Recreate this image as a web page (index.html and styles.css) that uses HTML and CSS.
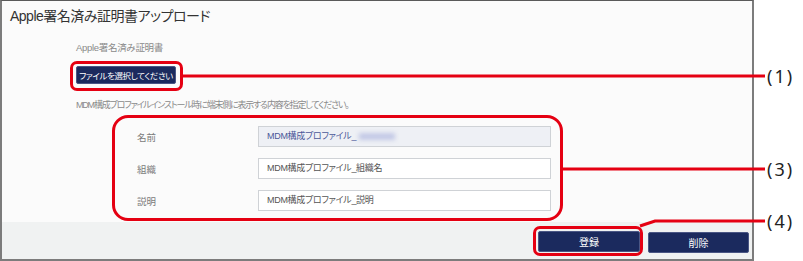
FILE: index.html
```html
<!DOCTYPE html>
<html lang="ja">
<head>
    <meta charset="UTF-8">
    <title>Apple署名済み証明書アップロード</title>
    <link rel="stylesheet" href="styles.css">
</head>
<body>
    <div class="page">
        <div class="screen">
            <div class="main">
                <h1 class="title">Apple署名済み証明書アップロード</h1>
                <div class="content">
                    <div class="field-label">Apple署名済み証明書</div>
                    <div class="mark mark-file">
                        <button class="btn btn-file">ファイルを選択してください</button>
                    </div>
                    <div class="hint">MDM構成プロファイルインストール時に端末側に表示する内容を指定してください。</div>
                    <div class="mark mark-form">
                        <div class="row">
                            <span class="row-label">名前</span>
                            <div class="input input-locked">MDM構成プロファイル_<span class="blurred"></span></div>
                        </div>
                        <div class="row">
                            <span class="row-label">組織</span>
                            <div class="input">MDM構成プロファイル_組織名</div>
                        </div>
                        <div class="row">
                            <span class="row-label">説明</span>
                            <div class="input">MDM構成プロファイル_説明</div>
                        </div>
                    </div>
                </div>
            </div>
            <div class="footer">
                <div class="mark mark-save">
                    <button class="btn btn-action">登録</button>
                </div>
                <button class="btn btn-action btn-delete">削除</button>
            </div>
        </div>

        <!-- callout lines drawn over the screen -->
        <svg class="callouts" width="803" height="261" viewBox="0 0 803 261">
            <line x1="183" y1="76" x2="765" y2="76" />
            <line x1="562" y1="169" x2="765" y2="169" />
            <polyline points="640,226 655,221 765,221" />
        </svg>
        <span class="callout-num num-1">(1)</span>
        <span class="callout-num num-3">(3)</span>
        <span class="callout-num num-4">(4)</span>
    </div>
</body>
</html>
```

FILE: styles.css
```css
body {
    margin: 0;
    background: #fff;
    font-family: "Liberation Sans", "Noto Sans CJK JP", sans-serif;
    font-feature-settings: "palt";
}

.page {
    position: relative;
    width: 803px;
    height: 261px;
}

.screen {
    width: 754px;
    height: 261px;
    box-sizing: border-box;
    border: 2px solid #7c7c7c;
    border-top: 1px solid #5a5a5a;
    background: #fbfbfb;
    display: flex;
    flex-direction: column;
}

.main {
    flex: 1;
    padding: 5px 8px 0;
}

.title {
    margin: 0;
    font-size: 14px;
    font-weight: normal;
    letter-spacing: -0.5px;
    line-height: 20px;
    color: #333;
}

.content {
    padding-left: 66px;
}

.field-label {
    margin-top: 15px;
    font-size: 9.5px;
    line-height: 14px;
    color: #8a8a8a;
    letter-spacing: -0.3px;
}

.mark {
    border: 3px solid #e50012;
    border-radius: 7px;
    box-sizing: border-box;
}

.mark-file {
    display: inline-block;
    margin: 6px 0 0 -6px;
    padding: 2px 4px 4px 3px;
}

.btn {
    display: block;
    border: 1px solid #4a5684;
    border-radius: 2px;
    background: #1b2a5e;
    color: #fff;
    font-family: inherit;
    font-feature-settings: "palt";
    cursor: pointer;
    padding: 0;
}

.btn-file {
    width: 100px;
    height: 18px;
    font-size: 8.5px;
    letter-spacing: -0.4px;
}

.hint {
    margin-top: 7px;
    font-size: 9px;
    line-height: 14px;
    color: #8a8a8a;
    letter-spacing: -1.2px;
}

.mark-form {
    width: 451px;
    height: 106px;
    margin: 3px 0 0 36px;
    border-radius: 16px;
    padding: 8px 9px 0 22px;
    display: flex;
    flex-direction: column;
    gap: 11px;
}

.row {
    display: flex;
    align-items: center;
}

.row-label {
    width: 121px;
    font-size: 9.5px;
    color: #7a7a7a;
}

.input {
    flex: 1;
    height: 21px;
    box-sizing: border-box;
    border: 1px solid #cfd2d6;
    background: #fff;
    padding-left: 8px;
    font-size: 9px;
    line-height: 19px;
    color: #555;
    letter-spacing: -0.3px;
}

.input-locked {
    background: #eef0f5;
    color: #4b5899;
}

.blurred {
    display: inline-block;
    width: 36px;
    height: 7px;
    margin-left: 3px;
    vertical-align: -1px;
    background: #c3c9e6;
    filter: blur(2px);
}

.footer {
    height: 37px;
    background: #f0f2f2;
    display: flex;
    justify-content: flex-end;
    align-items: flex-start;
    gap: 5px;
    padding-right: 3px;
}

.mark-save {
    margin-top: 4px;
    padding: 2px 0 1px 2px;
}

.btn-action {
    width: 102px;
    height: 21px;
    font-size: 10px;
}

.btn-delete {
    margin-top: 10px;
    width: 101px;
}

.callouts {
    position: absolute;
    left: 0;
    top: 0;
    pointer-events: none;
}

.callouts line,
.callouts polyline {
    stroke: #e50012;
    stroke-width: 3;
    fill: none;
}

.callout-num {
    position: absolute;
    left: 767px;
    font-family: "Noto Sans", sans-serif;
    font-size: 18px;
    letter-spacing: 2px;
    line-height: 22px;
    color: #222;
}

.num-1 { top: 65px; }
.num-3 { top: 158px; }
.num-4 { top: 210px; }
```
